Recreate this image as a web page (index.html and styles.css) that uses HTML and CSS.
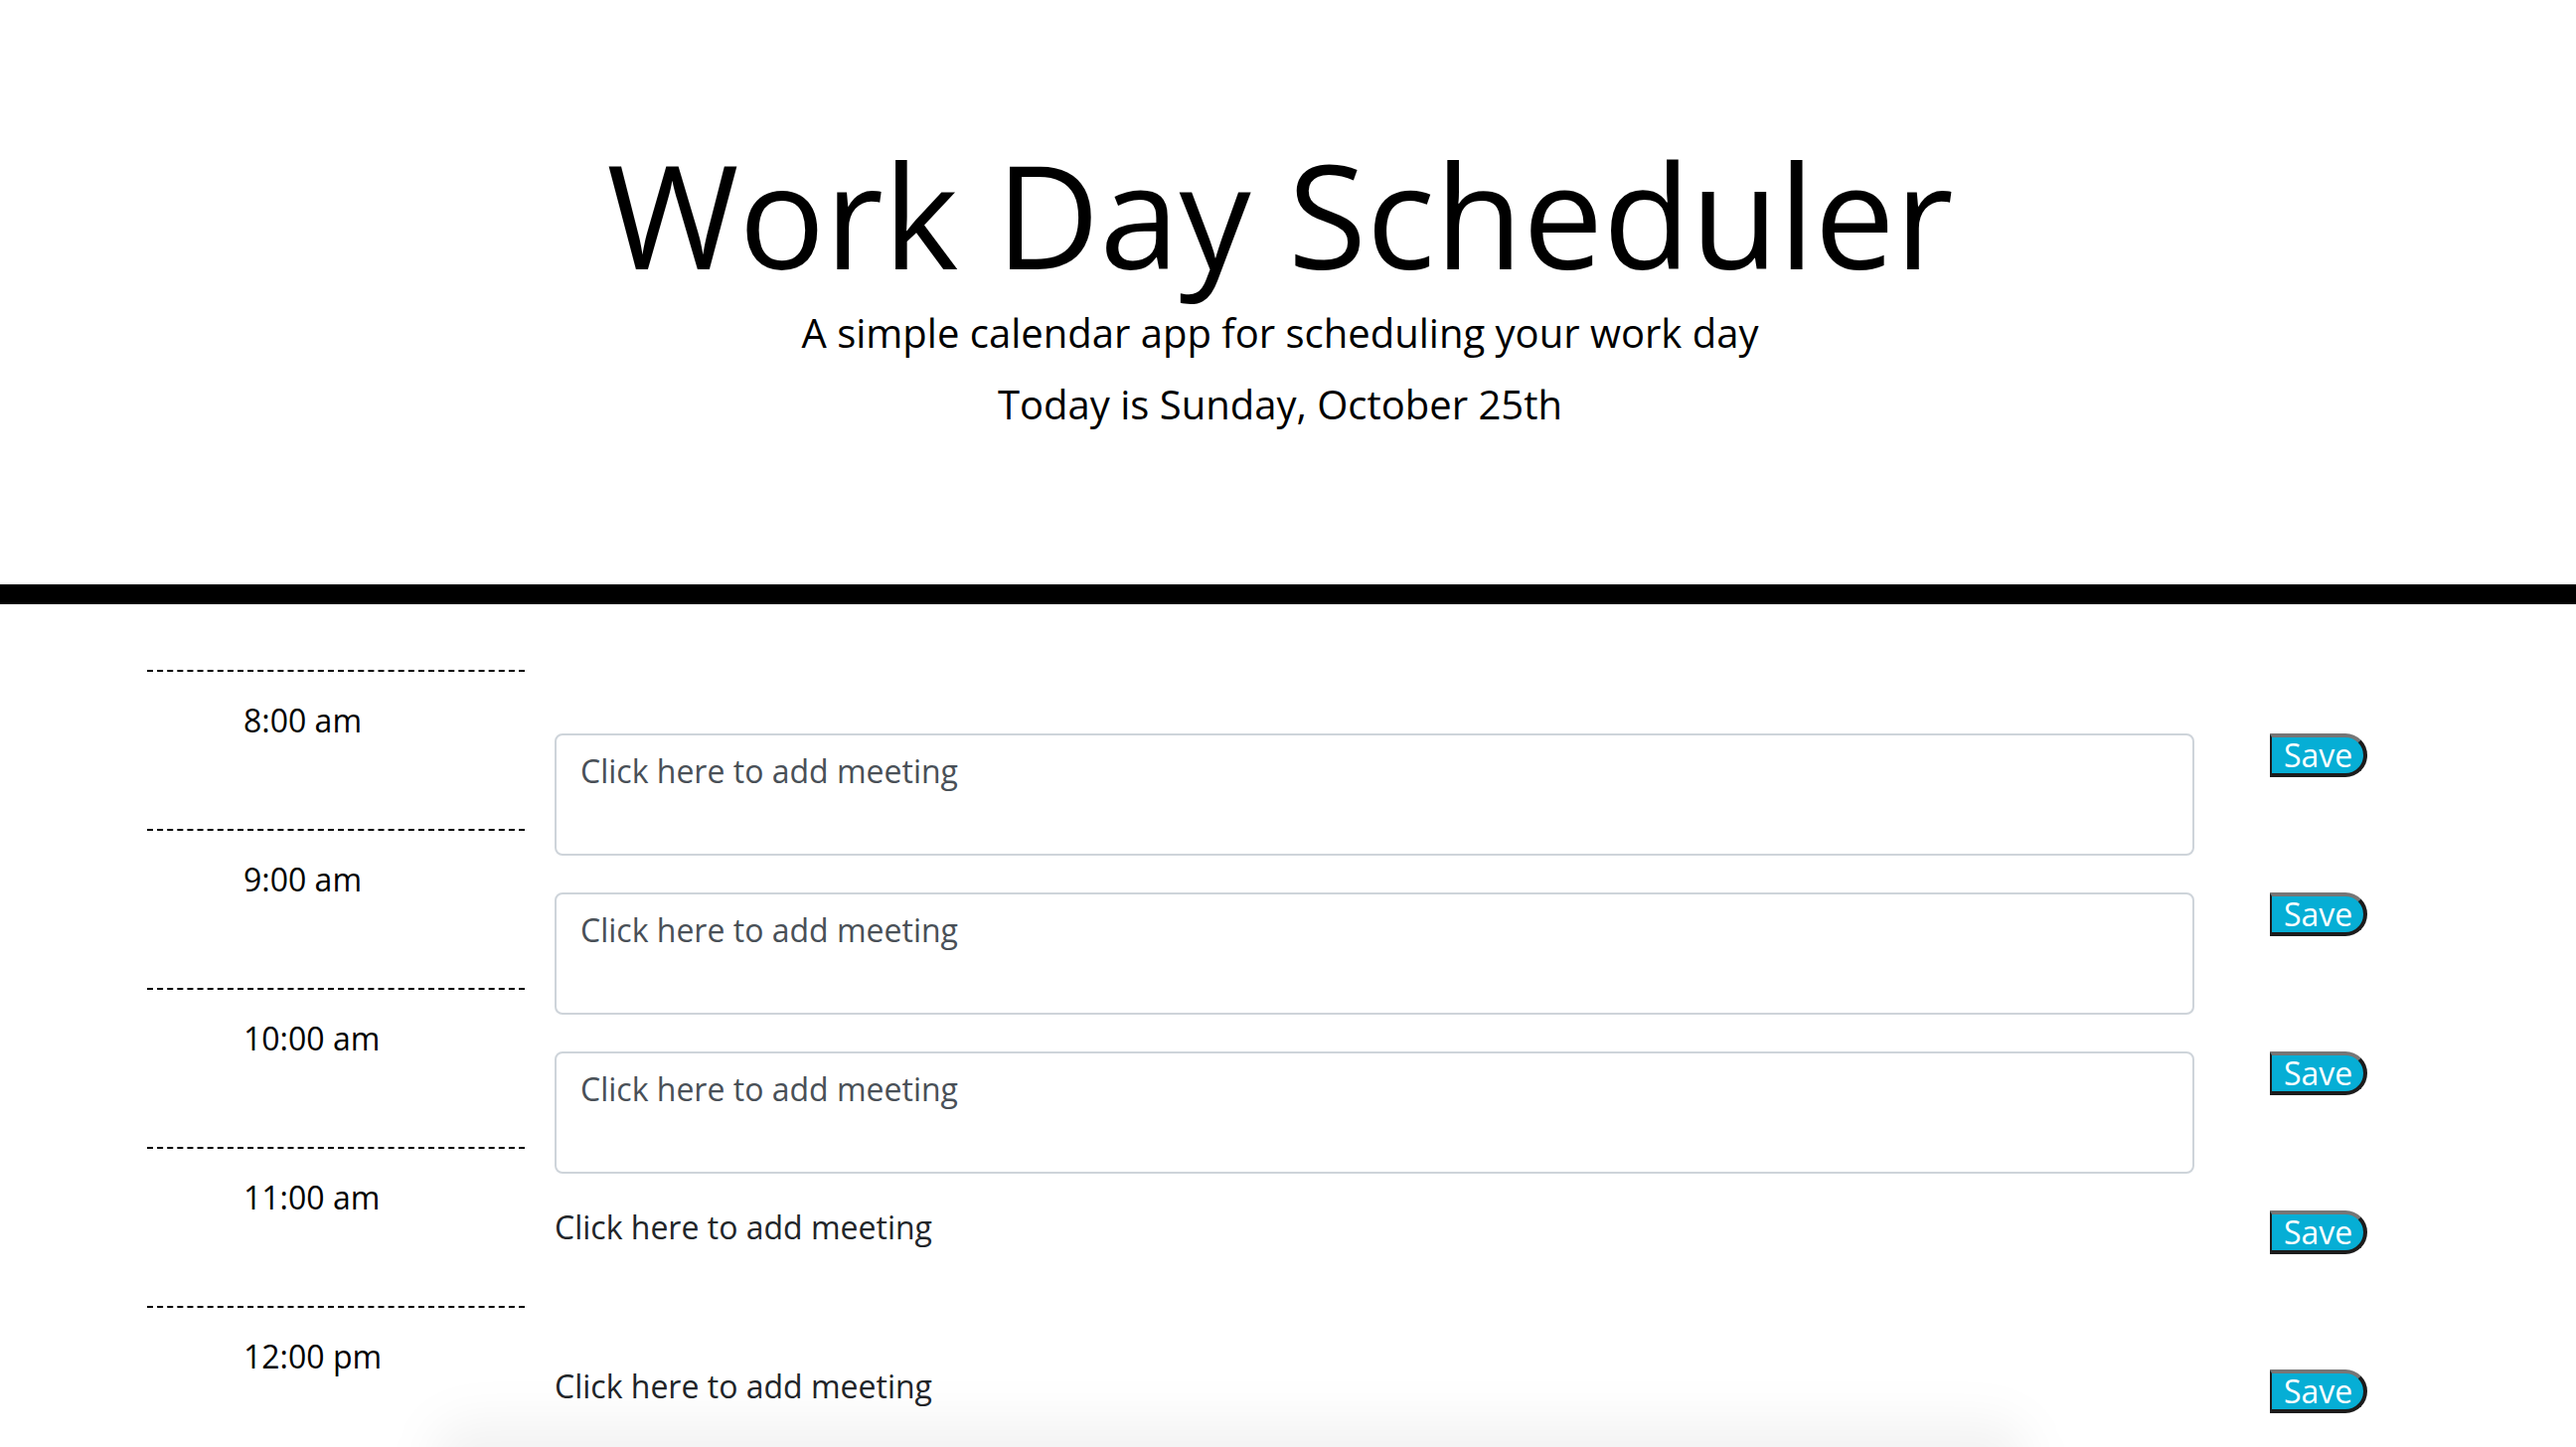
FILE: index.html
```html
<!DOCTYPE html>
<html lang="en">
<head>
<meta charset="utf-8">
<title>Work Day Scheduler</title>
<link rel="stylesheet" href="styles.css">
</head>
<body>
<header class="jumbotron">
  <h1 class="title">Work Day Scheduler</h1>
  <p class="lead">A simple calendar app for scheduling your work day</p>
  <p class="today">Today is Sunday, October 25th</p>
</header>
<main class="container">
  <div class="time-block">
    <div class="hour">8:00 am</div>
    <div class="desc-col"><textarea class="desc" placeholder="Click here to add meeting"></textarea></div>
    <div class="btn-col"><button class="saveBtn">Save</button></div>
  </div>
  <div class="time-block">
    <div class="hour">9:00 am</div>
    <div class="desc-col"><textarea class="desc" placeholder="Click here to add meeting"></textarea></div>
    <div class="btn-col"><button class="saveBtn">Save</button></div>
  </div>
  <div class="time-block">
    <div class="hour">10:00 am</div>
    <div class="desc-col"><textarea class="desc" placeholder="Click here to add meeting"></textarea></div>
    <div class="btn-col"><button class="saveBtn">Save</button></div>
  </div>
  <div class="time-block">
    <div class="hour">11:00 am</div>
    <div class="desc-col"><div class="plain">Click here to add meeting</div></div>
    <div class="btn-col"><button class="saveBtn">Save</button></div>
  </div>
  <div class="time-block">
    <div class="hour">12:00 pm</div>
    <div class="desc-col"><div class="plain">Click here to add meeting</div></div>
    <div class="btn-col"><button class="saveBtn">Save</button></div>
  </div>
</main>
<div class="shade"></div>
</body>
</html>
```
FILE: styles.css
```css
html, body {
  margin: 0;
  padding: 0;
  background: #ffffff;
}
body {
  font-family: "Open Sans", "Noto Sans", sans-serif;
  color: #000000;
  overflow: hidden;
  height: 1456px;
}
.jumbotron {
  box-sizing: border-box;
  height: 608px;
  padding: 150px 16px 0 0;
  text-align: center;
  border-bottom: 20px solid #000000;
}
.title {
  margin: 0 0 25px 0;
  font-size: 144px;
  font-weight: 400;
  line-height: 130px;
}
.lead {
  margin: 0 0 12px 0;
  font-size: 40px;
  font-weight: 400;
  line-height: 60px;
}
.today {
  margin: 0;
  font-size: 40px;
  line-height: 60px;
}
.container {
  margin: 66px 0 0 148px;
  width: 2280px;
}
.time-block {
  display: grid;
  grid-template-columns: 380px 1710px 190px;
  height: 160px;
  align-items: start;
}
.hour {
  border-top: 2px dashed #000000;
  padding: 33px 0 0 97px;
  font-size: 32px;
  line-height: 32px;
}
.desc-col {
  padding: 0 30px;
}
.desc {
  display: block;
  box-sizing: border-box;
  margin-top: 64px;
  width: 1650px;
  height: 123px;
  padding: 12px 24px;
  border: 2px solid #ced4da;
  border-radius: 8px;
  font-family: "Open Sans", "Noto Sans", sans-serif;
  font-size: 32px;
  line-height: 48px;
  color: #495057;
  background: #ffffff;
  resize: none;
  outline: none;
}
.desc::placeholder {
  color: #495057;
  opacity: 1;
}
.plain {
  margin-top: 57px;
  font-size: 32px;
  line-height: 48px;
  color: #212529;
}
.btn-col {
  display: flex;
  justify-content: center;
  margin-top: 64px;
}
.saveBtn {
  box-sizing: border-box;
  width: 98px;
  height: 44px;
  padding: 0 0 0 12px;
  text-align: left;
  background: #06aed5;
  color: #ffffff;
  font-family: "Open Sans", "Noto Sans", sans-serif;
  font-size: 32px;
  line-height: 36px;
  border-top: 4px solid #767676;
  border-left: 2px solid #1c1c1c;
  border-right: 4px solid #1c1c1c;
  border-bottom: 4px solid #1c1c1c;
  border-radius: 0 30px 30px 0;
}
.shade {
  position: fixed;
  left: 434px;
  width: 1608px;
  top: 1430px;
  height: 80px;
  border-radius: 60px;
  background: rgba(0, 0, 0, 0.05);
  filter: blur(24px);
  pointer-events: none;
}
```
